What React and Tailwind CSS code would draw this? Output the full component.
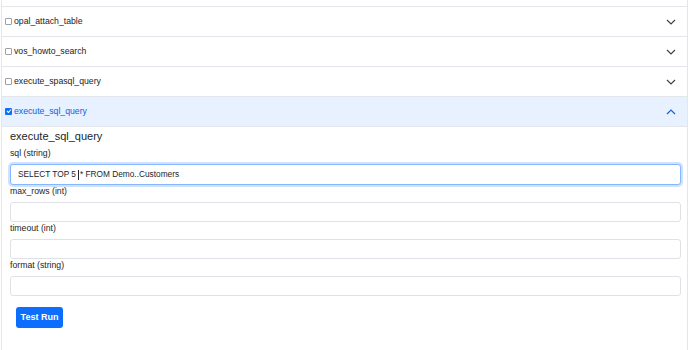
import React from "react";

const Chevron = ({ up = false }) => (
  <svg width="10" height="6" viewBox="0 0 10 6" fill="none" className="shrink-0">
    <polyline
      points={up ? "1,5 5,1 9,5" : "1,1 5,5 9,1"}
      stroke={up ? "#0c63e4" : "#3d4247"}
      strokeWidth="1.2"
    />
  </svg>
);

const Box = ({ checked = false }) =>
  checked ? (
    <span className="flex h-[7px] w-[7px] items-center justify-center rounded-[1px] bg-[#0d6efd]">
      <svg width="6" height="6" viewBox="0 0 6 6" fill="none">
        <polyline points="1,3 2.5,4.5 5,1.5" stroke="white" strokeWidth="1.1" />
      </svg>
    </span>
  ) : (
    <span className="h-[7px] w-[7px] rounded-[1px] border border-[#9aa0a6] bg-white" />
  );

const Row = ({ name, open = false }) => (
  <div
    className={
      "flex h-[30px] items-center justify-between border-b border-[#e3e6ea] pl-[3px] pr-[11px] " +
      (open ? "bg-[#e7f1ff] text-[#0c63e4]" : "bg-white text-[#212529]")
    }
  >
    <div className="flex items-center gap-[2px] text-[8.7px]">
      <Box checked={open} />
      <span>{name}</span>
    </div>
    <Chevron up={open} />
  </div>
);

const Field = ({ label, children }) => (
  <div>
    <div className="mb-[5px] text-[8.7px] leading-[12px] text-[#212529]">{label}</div>
    {children || (
      <div className="h-[20px] w-full rounded-[3px] border border-[#dee2e6] bg-white" />
    )}
  </div>
);

export default function App() {
  return (
    <div
      className="h-[350px] w-[690px] bg-white"
      style={{ fontFamily: '"Liberation Sans", Arial, sans-serif' }}
    >
      <div className="ml-px h-full w-[687px] border-x border-[#e3e6ea]">
        {/* leftover of previous item */}
        <div className="h-[7px] border-b border-[#e3e6ea]" />

        <Row name="opal_attach_table" />
        <Row name="vos_howto_search" />
        <Row name="execute_spasql_query" />
        <Row name="execute_sql_query" open />

        {/* Tool form */}
        <div className="pl-[8px] pr-[6px] pt-[2px]">
          <h2 className="mb-[4px] text-[11px] font-medium leading-[14px] text-[#212529]">
            execute_sql_query
          </h2>
          <Field label="sql (string)">
            <div className="flex h-[21px] w-full items-center rounded-[3px] border border-[#86b7fe] bg-white pl-[7px] text-[8.3px] text-[#212529] shadow-[0_0_0_2px_rgba(13,110,253,0.2)]">
              <span>SELECT TOP 5</span>
              <span className="ml-[2px] mr-[1px] inline-block h-[10px] w-px bg-[#212529]" />
              <span>* FROM Demo..Customers</span>
            </div>
          </Field>
          <Field label="max_rows (int)" />
          <Field label="timeout (int)" />
          <Field label="format (string)" />
          <div className="flex pl-[6px] pt-[11px]">
            <button
              type="button"
              className="h-[21px] w-[47px] rounded-[3px] bg-[#0d6efd] text-[9px] font-semibold text-white"
            >
              Test Run
            </button>
          </div>
        </div>
      </div>
    </div>
  );
}
